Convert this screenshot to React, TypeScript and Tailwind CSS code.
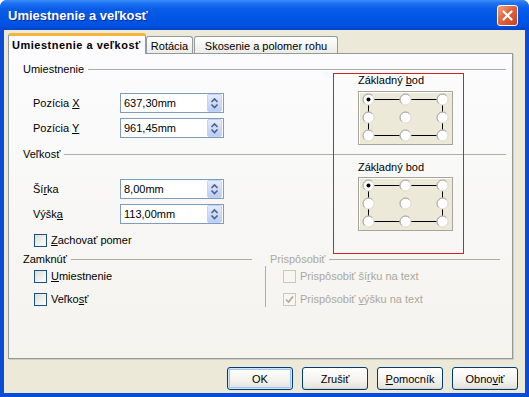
import React from 'react';

const U: React.FC<{ children: React.ReactNode }> = ({ children }) => (
  <span className="underline underline-offset-[1px]">{children}</span>
);

const SpinField: React.FC<{ value: string }> = ({ value }) => (
  <div className="w-[104px] h-[20px] border border-[#7F9DB9] bg-white flex items-center">
    <span className="flex-1 pl-[3px] leading-[14px]">{value}</span>
    <div className="w-[15px] h-[18px] mr-[1px] rounded-[2px] border border-[#c3d3f7] bg-[linear-gradient(to_bottom,#e3ebfe,#b9cdf6)] flex items-center justify-center">
      <svg width="13" height="16" viewBox="0 0 13 16">
        <path d="M3.5 7 L6.5 4 L9.5 7" fill="none" stroke="#4d6185" strokeWidth="1.6" />
        <path d="M3.5 9.5 L6.5 12.5 L9.5 9.5" fill="none" stroke="#4d6185" strokeWidth="1.6" />
      </svg>
    </div>
  </div>
);

const FieldRow: React.FC<{ label: React.ReactNode; value: string }> = ({ label, value }) => (
  <div className="flex items-center h-[20px]">
    <span className="w-[87px] leading-[14px]">{label}</span>
    <SpinField value={value} />
  </div>
);

const CheckBox: React.FC<{ checked?: boolean; disabled?: boolean }> = ({ checked, disabled }) => (
  <div
    className={`w-[13px] h-[13px] border flex items-center justify-center ${
      disabled
        ? 'border-[#cac8bb] bg-[#f7f6f1]'
        : 'border-[#1c5180] bg-[linear-gradient(135deg,#dcdcd7,#ffffff)]'
    }`}
  >
    {checked && (
      <svg width="9" height="9" viewBox="0 0 9 9">
        <path d="M1 4.5 L3.5 7 L8 1.5" fill="none" stroke={disabled ? '#aca899' : '#21a121'} strokeWidth="1.6" />
      </svg>
    )}
  </div>
);

const CheckRow: React.FC<{ label: React.ReactNode; checked?: boolean; disabled?: boolean; className?: string }> = ({
  label,
  checked,
  disabled,
  className = '',
}) => (
  <div className={`flex items-center h-[14px] gap-[4px] ${className}`}>
    <CheckBox checked={checked} disabled={disabled} />
    <span className={`leading-[14px] ${disabled ? 'text-[#aca899]' : ''}`}>{label}</span>
  </div>
);

const GroupHeader: React.FC<{ label: string; disabled?: boolean; className?: string }> = ({ label, disabled, className = '' }) => (
  <div className={`flex items-center h-[14px] ${className}`}>
    <span className={`leading-[14px] ${disabled ? 'text-[#aca899]' : ''}`}>{label}</span>
    <div className="flex-1 ml-[4px] h-px bg-[#aeada4]" />
  </div>
);

const Radio: React.FC<{ x: number; y: number; on?: boolean }> = ({ x, y, on }) => {
  const r = 5.5;
  const d = r * 0.7071;
  return (
    <g>
      <circle cx={x} cy={y} r={r} fill="#ffffff" stroke="#dcd8cc" strokeWidth="1" />
      <path
        d={`M${x - d} ${y + d} A${r} ${r} 0 0 1 ${x + d} ${y - d}`}
        fill="none"
        stroke="#a3a3a3"
        strokeWidth="1"
      />
      {on && <circle cx={x} cy={y} r="2" fill="#000" />}
    </g>
  );
};

const BasePoint: React.FC = () => {
  const xs = [9.5, 46.5, 83.5];
  const ys = [7.5, 25.5, 43.5];
  return (
    <div className="w-[95px] h-[54px] border border-[#a7a59b] bg-[#ECE9D8] shadow-[inset_1px_1px_0_#ffffff]">
      <svg width="93" height="52" viewBox="0 0 93 52">
        <path d="M9.5 7.5 H83.5 V43.5 H9.5 Z" fill="none" stroke="#000" strokeWidth="1" />
        {ys.map((y, i) =>
          xs.map((x, j) => <Radio key={`${i}-${j}`} x={x} y={y} on={i === 0 && j === 0} />)
        )}
      </svg>
    </div>
  );
};

const Tabs: React.FC = () => (
  <div className="h-[23px] flex items-end pl-[4px]">
    <div className="relative z-10 w-[138px] h-[21px] mb-[-1px] border-x border-[#919B9C] border-t-[3px] border-t-[#f7b43a] rounded-t-[3px] bg-[#FCFCFE] pl-[3px] pt-[1px] flex items-center font-bold tracking-[0.5px]">
      Umiestnenie a veľkosť
    </div>
    <div className="w-[47px] h-[17px] border border-b-0 border-[#919B9C] rounded-t-[3px] bg-[linear-gradient(to_bottom,#ffffff,#ecebe6)] flex items-center justify-center pt-[2px]">
      Rotácia
    </div>
    <div className="ml-[1px] w-[144px] h-[17px] border border-b-0 border-[#919B9C] rounded-t-[3px] bg-[linear-gradient(to_bottom,#ffffff,#ecebe6)] flex items-center justify-center pt-[2px]">
      Skosenie a polomer rohu
    </div>
  </div>
);

const Panel: React.FC = () => (
  <div className="relative ml-[4px] w-[505px] h-[306px] border border-[#919B9C] bg-[linear-gradient(to_bottom,#fcfcfe,#f4f3ee)] shadow-[1px_1px_0_#d0cdbf] pl-[14px] pr-[6px] pt-[8px]">
    {/* Umiestnenie */}
    <GroupHeader label="Umiestnenie" />
    <div className="flex">
      <div className="w-[335px] pl-[10px] pt-[17px] flex flex-col gap-[5px]">
        <FieldRow label={<>Pozícia <U>X</U></>} value="637,30mm" />
        <FieldRow label={<>Pozícia <U>Y</U></>} value="961,45mm" />
      </div>
      <div className="mt-[-3px] flex flex-col">
        <span className="leading-[14px]">Základný <U>b</U>od</span>
        <div className="mt-[4px]">
          <BasePoint />
        </div>
      </div>
    </div>

    {/* Veľkosť */}
    <GroupHeader label="Veľkosť" className="mt-[2px]" />
    <div className="flex">
      <div className="w-[335px] pl-[10px] pt-[18px] flex flex-col">
        <div className="flex flex-col gap-[5px]">
          <FieldRow label={<>Ší<U>r</U>ka</>} value="8,00mm" />
          <FieldRow label={<>Výšk<U>a</U></>} value="113,00mm" />
        </div>
        <CheckRow className="mt-[9px] pl-[1px]" label={<><U>Z</U>achovať pomer</>} />
      </div>
      <div className="mt-[-1px] flex flex-col">
        <span className="leading-[14px]">Zák<U>l</U>adný bod</span>
        <div className="mt-[3px]">
          <BasePoint />
        </div>
      </div>
    </div>

    {/* Zamknúť / Prispôsobiť */}
    <div className="flex mt-[5px]">
      <div className="w-[229px] flex flex-col">
        <GroupHeader label="Zamknúť" />
        <CheckRow className="mt-[3px] pl-[11px]" label={<><U>U</U>miestnenie</>} />
        <CheckRow className="mt-[9px] pl-[11px]" label={<>Veľko<U>s</U>ť</>} />
      </div>
      <div className="ml-[13px] w-[235px] flex flex-col">
        <GroupHeader label="Prispôsobiť" disabled className="pl-[5px]" />
        <div className="border-l border-[#aeada4] pl-[17px] pt-[3px] pb-[1px] flex flex-col gap-[9px]">
          <CheckRow disabled label={<>Prispôsobiť ší<U>r</U>ku na text</>} />
          <CheckRow disabled checked label={<>Prispôsobiť <U>v</U>ýšku na text</>} />
        </div>
      </div>
    </div>

    {/* annotation frame */}
    <div className="pointer-events-none absolute left-[324px] top-[19px] w-[131px] h-[181px] shadow-[inset_0_0_0_1px_#d42020]" />
  </div>
);

const XpButton: React.FC<{ children: React.ReactNode; primary?: boolean }> = ({ children, primary }) => (
  <button
    className={`w-[66px] h-[23px] rounded-[3px] border border-[#003c74] bg-[linear-gradient(to_bottom,#ffffff,#f3f2ee_60%,#e3e1d8)] flex items-center justify-center leading-[14px] ${
      primary ? 'shadow-[inset_0_0_0_1px_#cee7ff,inset_0_0_0_2px_#a4c2f0]' : 'shadow-[inset_0_-1px_0_#d6d0c5]'
    }`}
  >
    {children}
  </button>
);

export default function App() {
  return (
    <div className="w-[529px] h-[397px] flex flex-col rounded-t-[7px] bg-[#0a4cd8] font-['Liberation_Sans',Arial,sans-serif] text-[11px] text-black select-none">
      {/* title bar */}
      <div className="h-[30px] flex items-center justify-between pl-[8px] pr-[11px] rounded-t-[7px] bg-[linear-gradient(to_bottom,#3f8ff9_0%,#1d74f2_10%,#0a5ce8_30%,#0055e5_65%,#0050de_88%,#0043cb_100%)]">
        <span className="pt-[1px] text-[13px] font-bold text-white [text-shadow:1px_1px_0_#0b2a9a]">
          Umiestnenie a veľkosť
        </span>
        <div className="w-[21px] h-[21px] rounded-[3px] border border-white bg-[linear-gradient(135deg,#f0a386,#e0643d_45%,#c8421b)] flex items-center justify-center">
          <svg width="13" height="13" viewBox="0 0 13 13">
            <path d="M2.5 2.5 L10.5 10.5 M10.5 2.5 L2.5 10.5" stroke="#fff" strokeWidth="2.2" strokeLinecap="round" />
          </svg>
        </div>
      </div>

      {/* client area */}
      <div className="flex-1 mx-[4px] mb-[4px] bg-[#ECE9D8] flex flex-col">
        <Tabs />
        <Panel />
        <div className="flex justify-end gap-[9px] pr-[7px] pt-[8px]">
          <XpButton primary>OK</XpButton>
          <XpButton>Zrušiť</XpButton>
          <XpButton>
            <U>P</U>omocník
          </XpButton>
          <XpButton>
            Obno<U>v</U>iť
          </XpButton>
        </div>
      </div>
    </div>
  );
}
